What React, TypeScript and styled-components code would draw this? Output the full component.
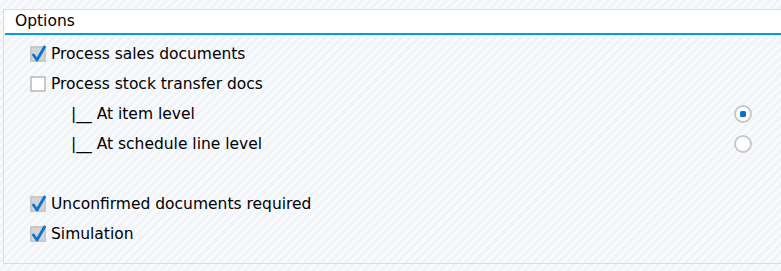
import React from 'react';
import styled, { createGlobalStyle } from 'styled-components';

const Global = createGlobalStyle`
    html, body {
        margin: 0;
        padding: 0;
    }
    body {
        font-family: "DejaVu Sans", Tahoma, sans-serif;
        color: #000;
        background-color: #f8fafc;
        background-image: repeating-linear-gradient(
            135deg,
            #f8fafc 0px,
            #f8fafc 3px,
            #f0f3f7 3px,
            #f0f3f7 6px
        );
        height: 271px;
        overflow: hidden;
    }
`

const Page = styled.div`
    padding: 9px 0 0 3px;
`

const Panel = styled.div`
    border-left: 1px solid #d9dde2;
    border-top: 1px solid #d9dde2;
    border-bottom: 1px solid #d9dde2;
    height: 255px;
    box-sizing: border-box;
`

const Header = styled.div`
    background: #fff;
    height: 23px;
    margin-left: 1px;
    padding-left: 10px;
    font-size: 15.5px;
    line-height: 22px;
    border-bottom: 2px solid #009de0;
`

const Body = styled.div`
    display: flex;
    flex-direction: column;
    padding: 4px 29px 0 26px;
`

const Row = styled.div<{ $indent?: boolean }>`
    display: flex;
    align-items: center;
    height: 30px;
    font-size: 15.5px;
    padding-left: ${p => (p.$indent ? '41px' : '0')};
`

const Box = styled.span<{ $checked?: boolean }>`
    position: relative;
    width: 16px;
    height: 16px;
    box-sizing: border-box;
    border: 2px solid #c9c9c9;
    background: ${p => (p.$checked ? '#d4d4d4' : '#fff')};
    margin-right: 5px;
    flex-shrink: 0;

    svg {
        position: absolute;
        left: 0;
        top: -3px;
    }
`

const Radio = styled.span<{ $on?: boolean }>`
    margin-left: auto;
    width: 18px;
    height: 18px;
    box-sizing: border-box;
    border: 2px solid #c8c8c8;
    border-radius: 50%;
    background: #fff;
    display: flex;
    align-items: center;
    justify-content: center;

    &::after {
        content: "";
        display: ${p => (p.$on ? 'block' : 'none')};
        width: 6px;
        height: 6px;
        border-radius: 1.5px;
        background: #0a6ed1;
    }
`

function Check({ checked }: { checked?: boolean }) {
    return (
        <Box $checked={checked}>
            {checked && (
                <svg width="14" height="17" viewBox="0 0 14 17">
                    <path d="M1.5 10 L5 15 L12.5 2" fill="none" stroke="#0a74d6" strokeWidth="2.8" strokeLinecap="round" strokeLinejoin="round" />
                </svg>
            )}
        </Box>
    )
}

function App() {
    return (
        <Page>
            <Global />
            <Panel>
                <Header>Options</Header>
                <Body>
                    <Row><Check checked />Process sales documents</Row>
                    <Row><Check />Process stock transfer docs</Row>
                    <Row $indent>|__ At item level<Radio $on /></Row>
                    <Row $indent>|__ At schedule line level<Radio /></Row>
                    <Row />
                    <Row><Check checked />Unconfirmed documents required</Row>
                    <Row><Check checked />Simulation</Row>
                </Body>
            </Panel>
        </Page>
    )
}

export default App
